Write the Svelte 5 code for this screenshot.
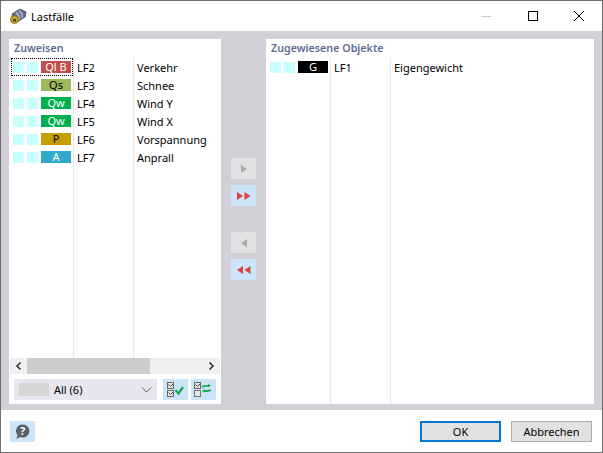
<script>
	let available = [
		{ chip: "Ql B", color: "#c0504d", text: "#ffffff", id: "LF2", name: "Verkehr" },
		{ chip: "Qs", color: "#9bbb59", text: "#000000", id: "LF3", name: "Schnee" },
		{ chip: "Qw", color: "#00b050", text: "#ffffff", id: "LF4", name: "Wind Y" },
		{ chip: "Qw", color: "#00b050", text: "#ffffff", id: "LF5", name: "Wind X" },
		{ chip: "P", color: "#c59f00", text: "#000000", id: "LF6", name: "Vorspannung" },
		{ chip: "A", color: "#31a9c9", text: "#ffffff", id: "LF7", name: "Anprall" }
	];
	let assigned = [{ chip: "G", color: "#000000", text: "#ffffff", id: "LF1", name: "Eigengewicht" }];
</script>

{#snippet list(items, focusFirst)}
	<div class="list">
		<div class="col col-icons">
			{#each items as item, i}
				<div class="row icons" class:focus={focusFirst && i === 0}>
					<span class="sq"></span>
					<span class="sq"></span>
					<span class="chip" style="background:{item.color};color:{item.text}">{item.chip}</span>
				</div>
			{/each}
		</div>
		<div class="col col-no">
			{#each items as item}
				<div class="row label">{item.id}</div>
			{/each}
		</div>
		<div class="col col-name">
			{#each items as item}
				<div class="row label">{item.name}</div>
			{/each}
		</div>
	</div>
{/snippet}

<div class="window">
	<header class="titlebar">
		<svg class="app-icon" width="18" height="18" viewBox="0 0 18 18">
			<path d="M3 7 L11 2 L17 5 L16 10 L8 15 L4 12 Z" fill="#5f6f8c" stroke="#39435a" stroke-width="0.8" />
			<path d="M7 5.500 L10 9 L10 13 M10 3.500 L13 7 L13 11" stroke="#c9d2e2" stroke-width="1.2" fill="none" />
			<circle cx="5.500" cy="12.500" r="4" fill="#c9a227" stroke="#6d5a10" stroke-width="0.7" />
			<rect x="4" y="12" width="3" height="2.500" fill="#4d3d05" />
		</svg>
		<span class="title">Lastfälle</span>
		<div class="win-controls">
			<svg width="46" height="30" viewBox="0 0 46 30"><path d="M17 15.500H27" stroke="#c8c8c8" /></svg>
			<svg width="46" height="30" viewBox="0 0 46 30"><rect x="18.500" y="10.500" width="9" height="9" fill="none" stroke="#000" /></svg>
			<svg width="46" height="30" viewBox="0 0 46 30"><path d="M18 10L28 20M28 10L18 20" stroke="#000" /></svg>
		</div>
	</header>

	<main class="body">
		<section class="panel left">
			<h2>Zuweisen</h2>
			{@render list(available, true)}
			<div class="scrollbar">
				<svg width="17" height="16" viewBox="0 0 17 16"><path d="M10.500 4.500L7 8l3.500 3.500" fill="none" stroke="#333" stroke-width="1.6" /></svg>
				<div class="track"><div class="thumb"></div></div>
				<svg width="17" height="16" viewBox="0 0 17 16"><path d="M6.500 4.500L10 8l-3.500 3.500" fill="none" stroke="#333" stroke-width="1.6" /></svg>
			</div>
			<div class="filter">
				<div class="combo">
					<span class="swatch"></span>
					<span class="combo-text">All (6)</span>
					<svg width="11" height="8" viewBox="0 0 11 8"><path d="M1 1.500l4.500 4.500 4.500-4.500" fill="none" stroke="#555" /></svg>
				</div>
				<button class="tool" aria-label="Alle auswählen">
					<svg width="25" height="21" viewBox="0 0 25 21">
						<rect x="4.500" y="3.500" width="6" height="6" fill="#e4e8ec" stroke="#666" />
						<rect x="4.500" y="11.500" width="6" height="6" fill="#e4e8ec" stroke="#666" />
						<path d="M5.500 5.500l2 2 2.500-2.500M5.500 13.500l2 2 2.500-2.500" fill="none" stroke="#444" />
						<path d="M12.500 11l3 3.500 4.500-6.500" fill="none" stroke="#12a84a" stroke-width="2.200" />
					</svg>
				</button>
				<button class="tool" aria-label="Auswahl umkehren">
					<svg width="25" height="21" viewBox="0 0 25 21">
						<rect x="3.500" y="3.500" width="6" height="6" fill="#e4e8ec" stroke="#666" />
						<rect x="3.500" y="11.500" width="6" height="6" fill="#e4e8ec" stroke="#777" />
						<path d="M4.500 5.500l2 2 2.500-2.500" fill="none" stroke="#444" />
						<path d="M11 8c2-1.500 4-1.500 7-1M20 11c-2 1-4 1.500-7 1" fill="none" stroke="#12a84a" stroke-width="1.600" />
						<path d="M17 5l3 1.500-3 2zM14 10l-3 2 3 1.500z" fill="#12a84a" />
					</svg>
				</button>
			</div>
		</section>

		<nav class="transfer">
			<button class="move off" aria-label="Zuweisen">
				<svg width="10" height="10" viewBox="0 0 10 10"><path d="M2 1l6 4-6 4z" fill="#aaa" /></svg>
			</button>
			<button class="move on" aria-label="Alle zuweisen">
				<svg width="16" height="10" viewBox="0 0 16 10"><path d="M1 1l6 4-6 4zM8.500 1l6 4-6 4z" fill="#dc4149" /></svg>
			</button>
			<button class="move off second" aria-label="Entfernen">
				<svg width="10" height="10" viewBox="0 0 10 10"><path d="M8 1L2 5l6 4z" fill="#aaa" /></svg>
			</button>
			<button class="move on" aria-label="Alle entfernen">
				<svg width="16" height="10" viewBox="0 0 16 10"><path d="M7 1L1 5l6 4zM14.500 1l-6 4 6 4z" fill="#dc4149" /></svg>
			</button>
		</nav>

		<section class="panel right">
			<h2>Zugewiesene Objekte</h2>
			{@render list(assigned, false)}
		</section>
	</main>

	<footer class="footer">
		<button class="tool help" aria-label="Hilfe">
			<svg width="25" height="21" viewBox="0 0 25 21">
				<path d="M12.500 3.500a7 6.500 0 1 1-2.500 12.600L6.500 18l1-4a7 6.500 0 0 1 5-10.500z" fill="#5a5f66" />
				<text x="12.500" y="14" class="help-mark">?</text>
			</svg>
		</button>
		<div class="actions">
			<button class="btn primary">OK</button>
			<button class="btn">Abbrechen</button>
		</div>
	</footer>
</div>

<style>
	:global(body) { margin: 0; background: #fff; }

	.window {
		width: 603px;
		height: 453px;
		box-sizing: border-box;
		border: 1px solid #6e6e6e;
		display: flex;
		flex-direction: column;
		font-family: "Noto Sans", "Open Sans", sans-serif;
		font-size: 11px;
		color: #000;
		background: #fff;
		overflow: hidden;
	}

	.titlebar { height: 30px; display: flex; align-items: center; flex: none; }
	.app-icon { margin-left: 8px; }
	.title { margin-left: 4px; font-size: 11px; }
	.win-controls { margin-left: auto; display: flex; }
	.win-controls svg { display: block; }

	.body {
		flex: 1;
		min-height: 0;
		background: #d0d0d6;
		padding: 8px 8px 6px 8px;
		display: flex;
	}

	.panel { background: #fff; display: flex; flex-direction: column; }
	.left { width: 212px; }
	.right { width: 328px; }

	h2 {
		margin: 0;
		height: 19px;
		line-height: 18px;
		padding-left: 5px;
		font-size: 10.7px;
		font-weight: 600;
		color: #5f6b94;
	}

	.list { flex: 1; min-height: 0; display: flex; }
	.col { box-sizing: border-box; }
	.col-icons { width: 65px; border-right: 1px solid #e8e8e8; }
	.col-no { width: 60px; border-right: 1px solid #e8e8e8; padding-left: 3px; }
	.col-name { flex: 1; padding-left: 3px; }

	.row { height: 18px; line-height: 18px; white-space: nowrap; }
	.label { padding-top: 1px; box-sizing: border-box; }
	.icons {
		display: flex;
		align-items: center;
		gap: 2px;
		margin-left: 2px;
		padding-left: 2px;
		width: 62px;
		box-sizing: border-box;
	}
	.focus { outline: 1px dotted #000; outline-offset: -1px; }

	.sq { width: 11px; height: 11px; background: #c8ffff; margin-right: 1px; flex: none; }
	.chip {
		width: 30px;
		height: 12px;
		line-height: 12px;
		text-align: center;
		flex: none;
	}

	.scrollbar {
		height: 16px;
		margin: 0 1px;
		display: flex;
		align-items: center;
		background: #f0f0f0;
		flex: none;
	}
	.scrollbar svg { flex: none; display: block; }
	.track { flex: 1; height: 16px; }
	.thumb { width: 123px; height: 16px; background: #cdcdcd; }

	.filter { display: flex; align-items: center; padding: 5px 5px 4px 5px; flex: none; }
	.combo {
		width: 143px;
		height: 21px;
		background: #e6e6f0;
		display: flex;
		align-items: center;
		padding: 0 5px;
		box-sizing: border-box;
		margin-right: 6px;
		flex: none;
	}
	.swatch { width: 30px; height: 13px; background: #d6d6d6; margin-right: 5px; }
	.combo-text { flex: 1; }

	button { padding: 0; border: 0; font: inherit; color: inherit; }
	button svg { display: block; }
	.tool { width: 25px; height: 21px; background: #cce4f7; flex: none; }
	.tool + .tool { margin-left: 3px; }

	.transfer {
		width: 45px;
		flex: none;
		display: flex;
		flex-direction: column;
		align-items: center;
		padding-top: 119px;
		gap: 6px;
		box-sizing: border-box;
	}
	.move {
		width: 25px;
		height: 21px;
		display: flex;
		align-items: center;
		justify-content: center;
		flex: none;
	}
	.off { background: #e1e1e1; }
	.on { background: #cce4f7; }
	.second { margin-top: 20px; }

	.footer {
		height: 42px;
		flex: none;
		display: flex;
		align-items: center;
		justify-content: space-between;
		padding: 0 10px 0 9px;
		box-sizing: border-box;
	}
	.help-mark { fill: #fff; font-size: 11px; font-weight: 700; text-anchor: middle; }

	.actions { display: flex; gap: 10px; }
	.btn {
		width: 81px;
		height: 21px;
		box-sizing: border-box;
		background: #e1e1e1;
		border: 1px solid #adadad;
		font-size: 11px;
	}
	.primary { border: 2px solid #0078d7; }
</style>
